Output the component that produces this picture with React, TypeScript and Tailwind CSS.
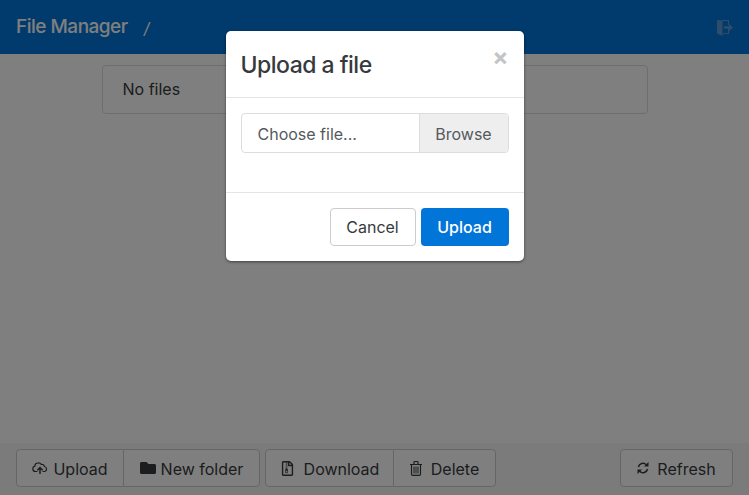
import { ReactNode } from 'react';
import { FaFolder, FaRegFileArchive } from 'react-icons/fa';

const font = "font-['Inter','Liberation_Sans',sans-serif]";

function CloudUpload() {
  return (
    <svg viewBox="0 0 16 12" className="h-[12px] w-[16px]" fill="none" stroke="currentColor" strokeWidth="1.2">
      <path d="M5.500 9.500H3.400A2.700 2.700 0 0 1 2.800 4.200 3.300 3.300 0 0 1 5.800 1 3.200 3.200 0 0 1 9.300 2.500 2.300 2.300 0 0 1 12.400 4.500 2.600 2.600 0 0 1 12.800 9.500H10.500" />
      <path d="M8 12V5.800M5.300 8.300 8 5.600l2.700 2.700" strokeWidth="1.500" />
    </svg>
  );
}

function DoorExit() {
  return (
    <svg viewBox="0 0 16 17" className="h-[17px] w-[16px]" fill="currentColor">
      <path d="M0 1 5.500 1.500v15.500L0 14.500z" />
      <path d="M5 1h7v5h-1V2H5zM11 10h1v5H6v-1h5z" />
      <path d="M7 7.200h5V5L16 8.500 12 12V9.800H7z" />
    </svg>
  );
}

function TrashIcon() {
  return (
    <svg viewBox="0 0 12 15" className="h-[15px] w-[12px]" fill="none" stroke="currentColor">
      <path d="M0 3.500h12M4 3.500V1.500q0-1 1-1h2q1 0 1 1v2" strokeWidth="1.200" />
      <path d="M1.500 3.500V13q0 1.400 1.300 1.400h6.400q1.300 0 1.300-1.400V3.500" strokeWidth="1.200" />
      <path d="M4 5.500V12.500M6 5.500V12.500M8 5.500V12.500" strokeWidth="1" />
    </svg>
  );
}

function RefreshIcon() {
  return (
    <svg viewBox="0 0 12 12" className="h-[12px] w-[12px]" fill="currentColor">
      <path d="M1.400 5A4.700 4.700 0 0 1 9.300 2.700" fill="none" stroke="currentColor" strokeWidth="1.500" />
      <path d="M10.600 7A4.700 4.700 0 0 1 2.700 9.300" fill="none" stroke="currentColor" strokeWidth="1.500" />
      <path d="M11.500 0v4.500H7zM.5 12V7.500H5z" />
    </svg>
  );
}

function ToolButton({ icon, label, className = '' }: { icon: ReactNode; label: string; className?: string }) {
  return (
    <button className={`flex h-[38px] items-center justify-center border border-[#ccc] bg-white text-base text-[#373a3c] ${className}`}>
      {icon}
      <span className="pt-px">{label}</span>
    </button>
  );
}

export default function App() {
  return (
    <div className={`relative flex h-screen w-full flex-col overflow-hidden bg-white ${font}`}>
      <header className="flex h-[54px] items-center justify-between bg-[#0275d8] pr-[16px] pl-4">
        <div className="flex items-center pt-px text-[19px] font-medium tracking-[-0.5px] text-white">
          <span>File Manager</span>
          <span className="ml-[16px] text-base font-normal italic">/</span>
        </div>
        <span className="text-[#5c9ad4]">
          <DoorExit />
        </span>
      </header>

      <main className="flex-1 pt-[11px]">
        <div className="mx-auto flex h-[49px] w-[546px] items-center rounded-[4px] border border-[#ddd] px-5 pb-[2px] text-base text-[#373a3c]">
          No files
        </div>
      </main>

      <footer className="flex h-[52px] items-center justify-between bg-[#f7f7f7] px-4 pb-[2px]">
        <div className="flex gap-[5px]">
          <div className="flex">
            <ToolButton icon={<CloudUpload />} label="Upload" className="w-[108px] gap-[5px] rounded-l-[4px]" />
            <ToolButton icon={<FaFolder className="text-[16px]" />} label="New folder" className="-ml-px w-[137px] gap-[5px] rounded-r-[4px]" />
          </div>
          <div className="flex">
            <ToolButton icon={<FaRegFileArchive className="text-[15px]" />} label="Download" className="w-[129px] gap-[9px] rounded-l-[4px]" />
            <ToolButton icon={<TrashIcon />} label="Delete" className="-ml-px w-[103px] gap-[9px] rounded-r-[4px]" />
          </div>
        </div>
        <ToolButton icon={<RefreshIcon />} label="Refresh" className="w-[113px] gap-[8px] rounded-[4px]" />
      </footer>

      {/* backdrop + dialog */}
      <div className="absolute inset-0 flex justify-center bg-black/50 pt-[31px]">
        <div className="h-[230px] w-[298px] rounded-[5px] bg-white shadow-[0_1px_3px_rgba(0,0,0,0.5)]">
          <div className="flex h-[67px] items-start justify-between border-b border-[#e5e5e5] px-[15px] pt-[16px]">
            <h5 className="text-[23px] leading-[36px] font-medium tracking-[-0.5px] text-[#373a3c]">Upload a file</h5>
            <span className="mt-[-6px] text-2xl font-bold text-[#c4c4c4]">×</span>
          </div>
          <div className="flex h-[95px] items-start border-b border-[#e5e5e5] px-[15px] pt-[15px]">
            <div className="flex h-10 w-full overflow-hidden rounded-[4px] border border-[#ddd] text-base text-[#55595c]">
              <div className="flex flex-1 items-center pt-[2px] pl-4">Choose file...</div>
              <div className="flex w-[89px] items-center justify-center border-l border-[#ddd] bg-[#eee] pt-[2px]">Browse</div>
            </div>
          </div>
          <div className="flex justify-end gap-[5px] px-[15px] pt-[15px]">
            <button className="h-[38px] w-[86px] rounded-[4px] border border-[#ccc] bg-white text-base text-[#373a3c]">Cancel</button>
            <button className="h-[38px] w-[88px] rounded-[4px] bg-[#0275d8] text-base font-medium text-white">Upload</button>
          </div>
        </div>
      </div>
    </div>
  );
}
